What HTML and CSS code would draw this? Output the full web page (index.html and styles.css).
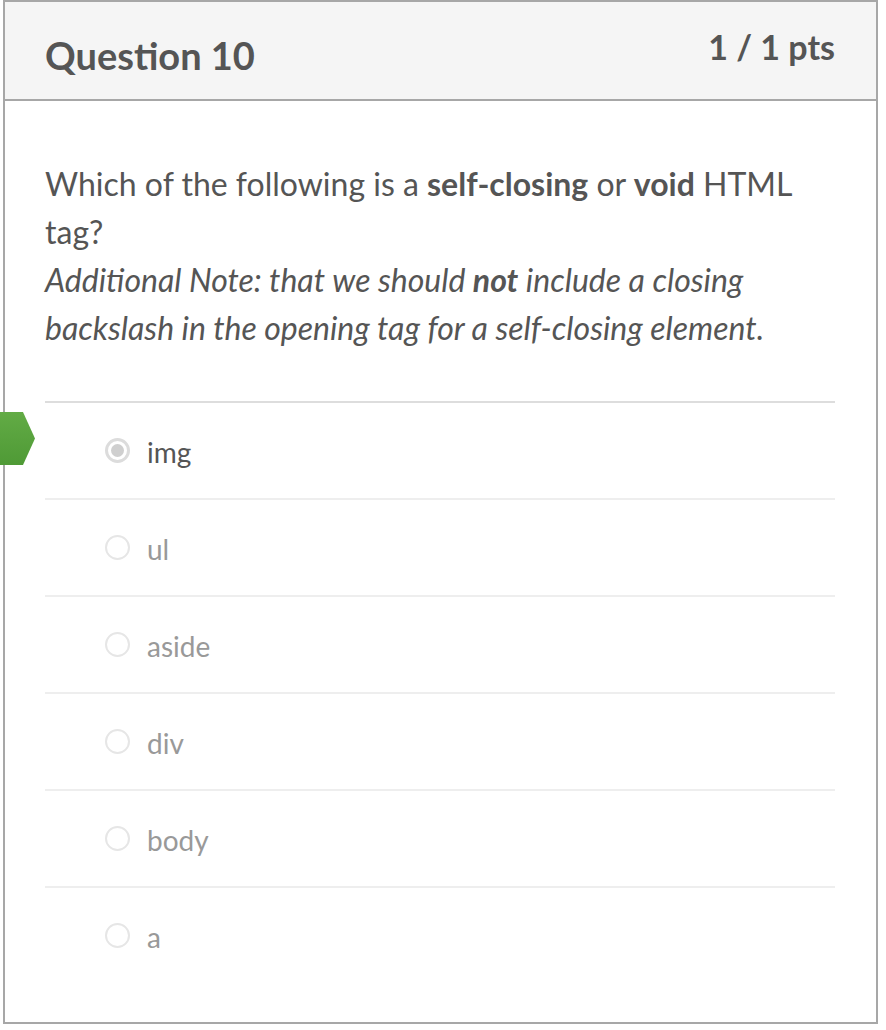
FILE: index.html
```html
<!DOCTYPE html>
<html>
<head>
<meta charset="utf-8">
<link rel="stylesheet" href="styles.css">
</head>
<body>
<div class="marker"></div>
<div class="card">
  <div class="card-header">
    <h2 class="title">Question 10</h2>
    <div class="pts">1 / 1 pts</div>
  </div>
  <div class="card-body">
    <div class="question">
      <p>Which of the following is a <strong>self-closing</strong> or <strong>void</strong> HTML tag?<br>
      <em>Additional Note: that we should <strong>not</strong> include a closing backslash in the opening tag for a self-closing element.</em></p>
    </div>
    <ul class="answers">
      <li class="answer selected"><span class="radio"></span><span class="label">img</span></li>
      <li class="answer"><span class="radio"></span><span class="label">ul</span></li>
      <li class="answer"><span class="radio"></span><span class="label">aside</span></li>
      <li class="answer"><span class="radio"></span><span class="label">div</span></li>
      <li class="answer"><span class="radio"></span><span class="label">body</span></li>
      <li class="answer"><span class="radio"></span><span class="label">a</span></li>
    </ul>
  </div>
</div>
</body>
</html>
```
FILE: styles.css
```css
html, body {
  margin: 0;
  padding: 0;
  background: #fff;
}
body {
  font-family: Lato, "Open Sans", sans-serif;
  color: #555;
}
.card {
  margin-left: 3px;
  width: 871px;
  height: 1020px;
  border: 2px solid #a7a7a7;
  background: #fff;
}
.card-header {
  height: 97px;
  background: #f5f5f5;
  border-bottom: 2px solid #a7a7a7;
  display: flex;
  justify-content: space-between;
  align-items: flex-start;
  padding: 0 41px 0 40px;
}
.title {
  margin: 0;
  padding-top: 31px;
  font-size: 38px;
  font-weight: 700;
  line-height: 1.2;
  color: #555;
}
.pts {
  padding-top: 25px;
  font-size: 34px;
  font-weight: 700;
  line-height: 1.2;
  color: #555;
}
.card-body {
  padding: 0 41px 0 40px;
}
.question p {
  margin: 0;
  padding-top: 59px;
  font-size: 32px;
  line-height: 48px;
  color: #555;
}
.question strong {
  font-weight: 700;
}
.answers {
  list-style: none;
  margin: 49px 0 0 0;
  padding: 0;
}
.answer {
  height: 95px;
  border-top: 2px solid #eee;
  display: flex;
  align-items: center;
  padding-left: 60px;
  font-size: 28px;
  color: #999;
}
.answer:first-child {
  border-top-color: #ddd;
}
.answer.selected {
  color: #555;
}
.label {
  margin-left: 17px;
  line-height: 32px;
  position: relative;
  top: 1px;
}
.radio {
  width: 21px;
  height: 21px;
  border: 2px solid #e6e6e6;
  border-radius: 50%;
  background: #fff;
  display: flex;
  align-items: center;
  justify-content: center;
  flex: none;
}
.answer.selected .radio {
  border: 3px solid #dcdcdc;
  width: 19px;
  height: 19px;
}
.answer.selected .radio::after {
  content: "";
  width: 13px;
  height: 13px;
  border-radius: 50%;
  background: #cfcfcf;
}
.marker {
  position: absolute;
  left: 0;
  top: 412px;
  width: 35px;
  height: 53px;
  background: linear-gradient(#62ab45, #4f9a36);
  clip-path: polygon(0 0, 23px 0, 35px 26.5px, 23px 53px, 0 53px);
}
```
